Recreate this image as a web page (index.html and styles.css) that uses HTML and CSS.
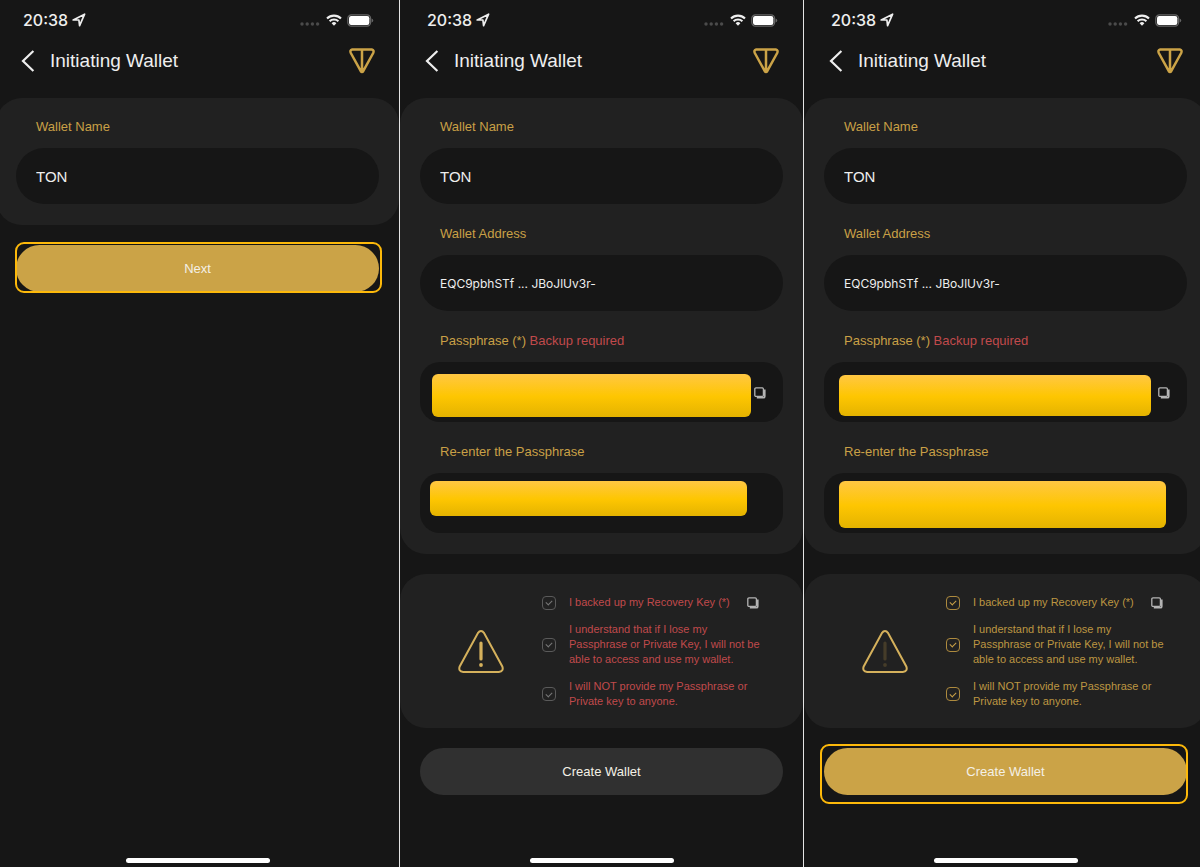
FILE: index.html
```html
<!DOCTYPE html>
<html lang="en">
<head>
<meta charset="utf-8">
<meta name="viewport" content="width=device-width, initial-scale=1">
<title>Initiating Wallet</title>
<link rel="stylesheet" href="styles.css">
</head>
<body>
<svg class="sprite" aria-hidden="true">
  <symbol id="i-location" viewBox="0 0 14 14"><path d="M1.2 7 12.6 1.2 7.6 12.6 6.9 7Z" fill="none" stroke="currentColor" stroke-width="1.7" stroke-linejoin="round"/></symbol>
  <symbol id="i-dots" viewBox="0 0 20 4"><g fill="#4b4b4b"><circle cx="2" cy="2" r="1.7"/><circle cx="7.2" cy="2" r="1.7"/><circle cx="12.4" cy="2" r="1.7"/><circle cx="17.6" cy="2" r="1.7"/></g></symbol>
  <symbol id="i-wifi" viewBox="0 0 16 12"><g fill="none" stroke="currentColor" stroke-width="2.1"><path d="M1 4.5a10 10 0 0 1 14 0"/><path d="M3.6 7.3a6.3 6.3 0 0 1 8.8 0"/></g><path d="M5.6 9.2a3.5 3.5 0 0 1 4.8 0L8 11.8Z" fill="currentColor"/></symbol>
  <symbol id="i-battery" viewBox="0 0 27 13"><rect x=".8" y=".8" width="22.8" height="11.4" rx="3.6" fill="none" stroke="#666" stroke-width="1.2"/><rect x="2" y="2" width="20.4" height="9" rx="2.2" fill="#fff"/><path d="M24.6 4.6q1.6.5 1.6 1.9t-1.6 1.9Z" fill="#666"/></symbol>
  <symbol id="i-back" viewBox="0 0 14 22"><path d="M12.4 1 2 11 12.4 21" fill="none" stroke="currentColor" stroke-width="2.2"/></symbol>
  <symbol id="i-ton" viewBox="0 0 26 26"><path d="M3.2 1.5H22.8Q25.4 2 24.2 5L14.2 23.2Q13 25 11.8 23.2L1.8 5Q.6 2 3.2 1.5ZM13 2V23" fill="none" stroke="currentColor" stroke-width="2.5" stroke-linejoin="round"/></symbol>
  <symbol id="i-copy" viewBox="0 0 12 12"><rect x=".8" y=".8" width="8.6" height="8.6" rx="1.2" fill="none" stroke="currentColor" stroke-width="1.3"/><path d="M10.8 2.6v6.8a1.4 1.4 0 0 1-1.4 1.4H2.8" fill="none" stroke="currentColor" stroke-width="1.6"/></symbol>
  <symbol id="i-warning" viewBox="0 0 46 44"><path d="M19.8 3.2Q23 -1 26.2 3.2L44.3 36.4Q46 41.4 40.8 42H5.2Q0 41.4 1.7 36.4Z" fill="none" stroke="#d5b15c" stroke-width="2"/><path d="M23 13V29" fill="none" stroke-width="3.2" stroke-linecap="round" stroke="currentColor"/><circle cx="23" cy="35" r="1.9" fill="currentColor"/></symbol>
</svg>

<main class="phones">
  <section class="phone">
    <div class="status"><span class="time">20:38</span><svg class="location"><use href="#i-location"/></svg><svg class="dots"><use href="#i-dots"/></svg><svg class="wifi"><use href="#i-wifi"/></svg><svg class="battery"><use href="#i-battery"/></svg></div>
    <header class="bar"><button class="icon-button" aria-label="Back"><svg class="back"><use href="#i-back"/></svg></button><h1>Initiating Wallet</h1><svg class="ton"><use href="#i-ton"/></svg></header>
    <form class="card fields">
      <div class="group"><label for="name1">Wallet Name</label><input class="field name" id="name1" value="TON"></div>
    </form>
    <div class="action"><button class="cta gold">Next</button><span class="highlight tight"></span></div>
    <div class="home"></div>
  </section>

  <section class="phone">
    <div class="status"><span class="time">20:38</span><svg class="location"><use href="#i-location"/></svg><svg class="dots"><use href="#i-dots"/></svg><svg class="wifi"><use href="#i-wifi"/></svg><svg class="battery"><use href="#i-battery"/></svg></div>
    <header class="bar"><button class="icon-button" aria-label="Back"><svg class="back"><use href="#i-back"/></svg></button><h1>Initiating Wallet</h1><svg class="ton"><use href="#i-ton"/></svg></header>
    <form class="card fields">
      <div class="group"><label for="name2">Wallet Name</label><input class="field name" id="name2" value="TON"></div>
      <div class="group"><label for="addr2">Wallet Address</label><input class="field address" id="addr2" value="EQC9pbhSTf ... JBoJlUv3r-" readonly></div>
      <div class="group"><label for="pass2">Passphrase (*) <span class="required">Backup required</span></label>
        <div class="secret"><textarea class="field phrase" id="pass2" readonly></textarea><span class="cover cover-a"></span><button type="button" class="icon-button copy-over" aria-label="Copy passphrase"><svg class="copy"><use href="#i-copy"/></svg></button></div></div>
      <div class="group"><label for="again2">Re-enter the Passphrase</label>
        <div class="secret"><textarea class="field phrase" id="again2"></textarea><span class="cover cover-b"></span></div></div>
    </form>
    <form class="card consent pending">
      <svg class="warning"><use href="#i-warning"/></svg>
      <div class="checks">
        <div class="check"><input type="checkbox" id="a2"><label for="a2">I backed up my Recovery Key (*)</label><button type="button" class="icon-button copy-key" aria-label="Copy recovery key"><svg class="copy"><use href="#i-copy"/></svg></button></div>
        <div class="check"><input type="checkbox" id="b2"><label for="b2">I understand that if I lose my<br>Passphrase or Private Key, I will not be<br>able to access and use my wallet.</label></div>
        <div class="check"><input type="checkbox" id="c2"><label for="c2">I will NOT provide my Passphrase or<br>Private key to anyone.</label></div>
      </div>
    </form>
    <div class="action"><button class="cta">Create Wallet</button></div>
    <div class="home"></div>
  </section>

  <section class="phone">
    <div class="status"><span class="time">20:38</span><svg class="location"><use href="#i-location"/></svg><svg class="dots"><use href="#i-dots"/></svg><svg class="wifi"><use href="#i-wifi"/></svg><svg class="battery"><use href="#i-battery"/></svg></div>
    <header class="bar"><button class="icon-button" aria-label="Back"><svg class="back"><use href="#i-back"/></svg></button><h1>Initiating Wallet</h1><svg class="ton"><use href="#i-ton"/></svg></header>
    <form class="card fields">
      <div class="group"><label for="name3">Wallet Name</label><input class="field name" id="name3" value="TON"></div>
      <div class="group"><label for="addr3">Wallet Address</label><input class="field address" id="addr3" value="EQC9pbhSTf ... JBoJlUv3r-" readonly></div>
      <div class="group"><label for="pass3">Passphrase (*) <span class="required">Backup required</span></label>
        <div class="secret"><textarea class="field phrase" id="pass3" readonly></textarea><span class="cover cover-c"></span><button type="button" class="icon-button copy-over" aria-label="Copy passphrase"><svg class="copy"><use href="#i-copy"/></svg></button></div></div>
      <div class="group"><label for="again3">Re-enter the Passphrase</label>
        <div class="secret"><textarea class="field phrase" id="again3"></textarea><span class="cover cover-d"></span></div></div>
    </form>
    <form class="card consent agreed">
      <svg class="warning"><use href="#i-warning"/></svg>
      <div class="checks">
        <div class="check"><input type="checkbox" id="a3" checked><label for="a3">I backed up my Recovery Key (*)</label><button type="button" class="icon-button copy-key" aria-label="Copy recovery key"><svg class="copy"><use href="#i-copy"/></svg></button></div>
        <div class="check"><input type="checkbox" id="b3" checked><label for="b3">I understand that if I lose my<br>Passphrase or Private Key, I will not be<br>able to access and use my wallet.</label></div>
        <div class="check"><input type="checkbox" id="c3" checked><label for="c3">I will NOT provide my Passphrase or<br>Private key to anyone.</label></div>
      </div>
    </form>
    <div class="action"><button class="cta gold">Create Wallet</button><span class="highlight loose"></span></div>
    <div class="home"></div>
  </section>
</main>
</body>
</html>
```
FILE: styles.css
```css
* { box-sizing: border-box; }
body {
  margin: 0;
  overflow-x: hidden;
  background: #161616;
  color: #eee;
  font-family: "Liberation Sans", Arial, sans-serif;
  font-size: 13px;
}
button, input, textarea { font: inherit; color: inherit; }
svg { display: block; flex: none; }
.sprite { position: absolute; width: 0; height: 0; }

/* The outer phones run slightly past the window edges. */
.phones {
  display: grid;
  grid-template-columns: repeat(3, 1fr);
  min-height: 100vh;
  margin: 0 -8px 0 -4px;
}
.phone {
  display: flex;
  flex-direction: column;
  min-width: 0;
  border-right: 1px solid #e4e4e4;
}

.status {
  display: flex;
  align-items: center;
  height: 40px;
  padding: 0 25px 0 27px;
}
.time { font-family: Inter, sans-serif; font-size: 16px; font-weight: 500; }
.location { width: 14px; height: 14px; margin-left: 4px; }
.dots { width: 20px; height: 4px; margin: 8px 6px 0 auto; }
.wifi { width: 16px; height: 12px; margin-right: 5px; }
.battery { width: 27px; height: 13px; }

.bar {
  display: flex;
  align-items: center;
  height: 42px;
  margin-bottom: 16px;
  padding: 0 24px 0 25px;
}
.bar h1 { flex: 1; margin: 0 0 0 15px; font-size: 19px; font-weight: 400; }
.icon-button { flex: none; padding: 0; border: 0; background: none; }
.back { width: 14px; height: 22px; }
.ton { width: 26px; height: 26px; color: #cba347; }

.card { border-radius: 26px; background: #212121; }
.fields {
  display: grid;
  gap: 20px;
  margin-bottom: 20px;
  padding: 19px 20px 21px;
}
.group { display: grid; gap: 12px; }
.group label { padding-left: 20px; color: #c9a046; line-height: 19px; }
.group .required { color: #c04a4c; }
.field {
  display: block;
  width: 100%;
  height: 56px;
  padding: 0 20px;
  border: 0;
  border-radius: 28px;
  outline: 0;
  background: #161616;
}
.name { font-size: 15px; }
.address { font-family: Inter, sans-serif; font-size: 12px; }
.phrase { height: 60px; border-radius: 20px; resize: none; }
.secret { position: relative; }
.cover {
  position: absolute;
  border-radius: 6px;
  background: linear-gradient(#ffc743, #fec601 52%, #e4b300);
}
.cover-a { inset: 12px 32px 5px 12px; }
.cover-b { inset: 8px 36px 17px 10px; }
.cover-c { inset: 13px 36px 6px 15px; }
.cover-d { inset: 8px 21px 5px 15px; }
.copy-over { position: absolute; top: 25px; right: 17px; }
.copy { width: 12px; height: 12px; color: #b4b4b4; }
.copy-key { margin-left: 4px; }

.consent {
  display: flex;
  align-items: center;
  margin-bottom: 20px;
  padding: 21px 20px 19px 58px;
}
.warning { width: 46px; height: 44px; color: #d5b15c; }
.agreed .warning { color: #453c29; }
.checks { display: grid; gap: 12px; margin-left: 38px; }
.check { display: flex; align-items: center; gap: 13px; }
.check label { color: #c04a4c; font-size: 11px; line-height: 15px; white-space: nowrap; }
.agreed .check label { color: #bd9642; }
.check input {
  display: grid;
  flex: none;
  place-items: center;
  width: 14px;
  height: 14px;
  margin: 0;
  border: 1px solid #5a5a5a;
  border-radius: 4px;
  appearance: none;
  color: #777;
}
.check input::before {
  content: "";
  width: 5px;
  height: 3px;
  margin-bottom: 1px;
  border: solid currentColor;
  border-width: 0 0 1px 1px;
  transform: rotate(-45deg);
}
.check input:checked { border-color: #ad8a3e; color: #c9a046; }

.action { position: relative; margin: 0 20px; }
.cta {
  display: block;
  width: 100%;
  height: 47px;
  border: 0;
  border-radius: 24px;
  background: #303030;
  color: #f4f0e6;
}
.cta.gold { background: #cba347; }
.highlight {
  position: absolute;
  border: 2px solid #fdb90a;
  border-radius: 9px;
  pointer-events: none;
}
.tight { inset: -3px -3px -1px -1px; }
.loose { inset: -4px -1px -9px -4px; }

.home {
  width: 144px;
  height: 5px;
  margin: auto auto 4px;
  border-radius: 3px;
  background: #fff;
}
```
